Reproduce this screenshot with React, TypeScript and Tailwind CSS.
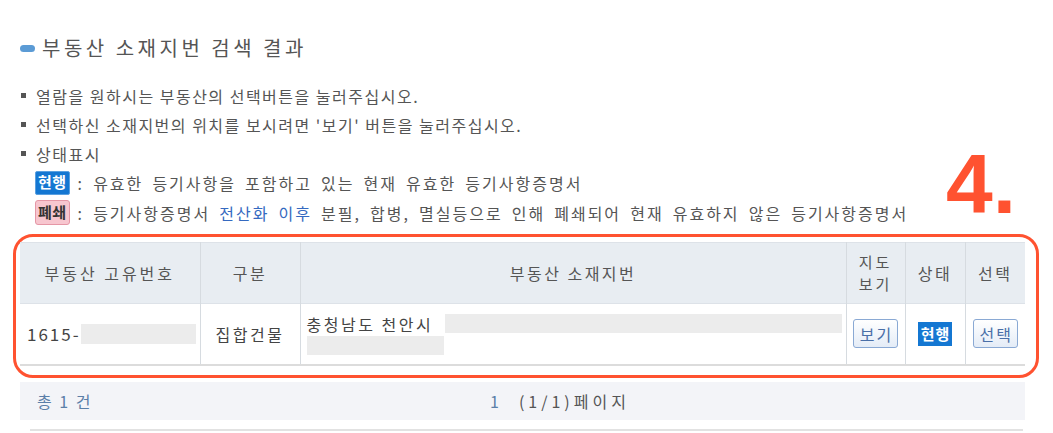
const font = { fontFamily: '"Noto Sans CJK KR", "Noto Sans", sans-serif' };

function Bullet({ children }: { children: React.ReactNode }) {
  return (
    <li className="flex items-center h-[29px]">
      <span className="w-[5px] h-[5px] bg-[#555] mr-[10px] ml-[1px] shrink-0"></span>
      <span>{children}</span>
    </li>
  );
}

function Btn({ label }: { label: string }) {
  return (
    <span className="inline-flex items-center justify-center h-[29px] pl-[6px] pr-[4px] border border-[#8aa9d4] rounded-[3px] bg-gradient-to-b from-white to-[#e4ecf7] text-[#4a6fa8] text-[16px] tracking-[2px] leading-none">
      {label}
    </span>
  );
}

export default function App() {
  return (
    <div className="w-[1053px] h-[433px] bg-white text-[#555] overflow-hidden relative" style={font}>
      <div className="pt-[34px] pl-[20px] flex items-center">
        <span className="w-[15px] h-[7px] rounded-full bg-[#5b9bd5] mr-[7px]"></span>
        <h2 className="text-[20px] tracking-[3.5px] leading-[28px] text-[#555]">부동산 소재지번 검색 결과</h2>
      </div>

      <ul className="mt-[19px] pl-[20px] text-[16px] tracking-[1.5px] text-[#555]">
        <Bullet>열람을 원하시는 부동산의 선택버튼을 눌러주십시오.</Bullet>
        <Bullet>선택하신 소재지번의 위치를 보시려면 '보기' 버튼을 눌러주십시오.</Bullet>
        <Bullet>상태표시</Bullet>
      </ul>
      <div className="pl-[35px] text-[16px] tracking-[2px] [word-spacing:3.5px]">
        <div className="flex items-center h-[29px]">
          <span className="inline-flex items-center px-[2px] h-[24px] bg-[#1477d2] border border-[#5aa0e0] text-white font-bold rounded-[2px] text-[15px] tracking-[0.5px]">현행</span>
          <span className="ml-[8px]">: 유효한 등기사항을 포함하고 있는 현재 유효한 등기사항증명서</span>
        </div>
        <div className="flex items-center h-[31px]">
          <span className="inline-flex items-center px-[2px] h-[25px] bg-[#f7c6cf] border border-[#e597a6] text-[#333] font-bold rounded-[3px] text-[15px] tracking-[0.5px]">폐쇄</span>
          <span className="ml-[8px]">
            : 등기사항증명서 <span className="text-[#3569c0]">전산화 이후</span> 분필, 합병, 멸실등으로 인해 폐쇄되어 현재 유효하지 않은 등기사항증명서
          </span>
        </div>
      </div>

      <div className="absolute left-[946px] top-[142px] text-[#ff5230] text-[84px] font-black leading-none" style={{ fontFamily: '"Liberation Sans", sans-serif' }}>
        4.
      </div>

      <div className="mt-[6px] mx-[13px] w-[1026px] border-[3px] border-[#ff5230] rounded-[20px] pt-[5px] pb-[9px] pl-[4px]">
        <table className="w-[1005px] table-fixed border-collapse text-[16px] tracking-[2.5px] text-[#555]">
          <colgroup>
            <col className="w-[180px]" />
            <col className="w-[100px]" />
            <col className="w-[546px]" />
            <col className="w-[59px]" />
            <col className="w-[60px]" />
            <col className="w-[60px]" />
          </colgroup>
          <thead>
            <tr className="h-[61px] bg-[#e8edf2] border-t border-[#dde2e8]">
              <th className="font-normal border-r border-[#d6dbe0] tracking-[3px]">부동산 고유번호</th>
              <th className="font-normal border-r border-[#d6dbe0]">구분</th>
              <th className="font-normal border-r border-[#d6dbe0]">부동산 소재지번</th>
              <th className="font-normal border-r border-[#d6dbe0] text-[15px] leading-[22px] tracking-[3px]">지도<br />보기</th>
              <th className="font-normal border-r border-[#d6dbe0]">상태</th>
              <th className="font-normal">선택</th>
            </tr>
          </thead>
          <tbody>
            <tr className="h-[61px] border-t border-[#dde2e8] border-b-2 border-b-[#dcdcdc] text-[#444]">
              <td className="border-r border-[#d6dbe0] pl-[7px]">
                <div className="flex items-center">
                  <span className="text-[17px] tracking-[2px]">1615-</span>
                  <span className="w-[115px] h-[20px] bg-[#ececec]"></span>
                </div>
              </td>
              <td className="border-r border-[#d6dbe0] text-center">집합건물</td>
              <td className="border-r border-[#d6dbe0] pl-[6px] pr-[4px]">
                <div className="flex items-center h-[22px]">
                  <span className="mr-[12px]">충청남도 천안시</span>
                  <span className="flex-1 h-[19px] bg-[#ececec]"></span>
                </div>
                <div className="w-[137px] h-[19px] bg-[#ececec] mt-[1px]"></div>
              </td>
              <td className="border-r border-[#d6dbe0] text-center">
                <Btn label="보기" />
              </td>
              <td className="border-r border-[#d6dbe0] text-center">
                <span className="inline-flex items-center pl-[3px] pr-[2px] h-[24px] bg-[#1477d2] text-white font-bold text-[15px] tracking-[1px]">현행</span>
              </td>
              <td className="text-center">
                <Btn label="선택" />
              </td>
            </tr>
          </tbody>
        </table>
      </div>

      <div className="mt-[4px] mx-[20px] w-[1005px] h-[38px] bg-[#f3f4f8] flex items-center text-[16px] text-[#5b7fa8] tracking-[2px]">
        <span className="pl-[17px] w-[470px]">총 1 건</span>
        <span className="text-[#5b7fa8]">1</span>
        <span className="ml-[18px] text-[#555] tracking-[4px]">(1/1)페이지</span>
      </div>
      <div className="mt-[9px] mx-[30px] h-[2px] bg-[#e2e2e2]"></div>
    </div>
  );
}
